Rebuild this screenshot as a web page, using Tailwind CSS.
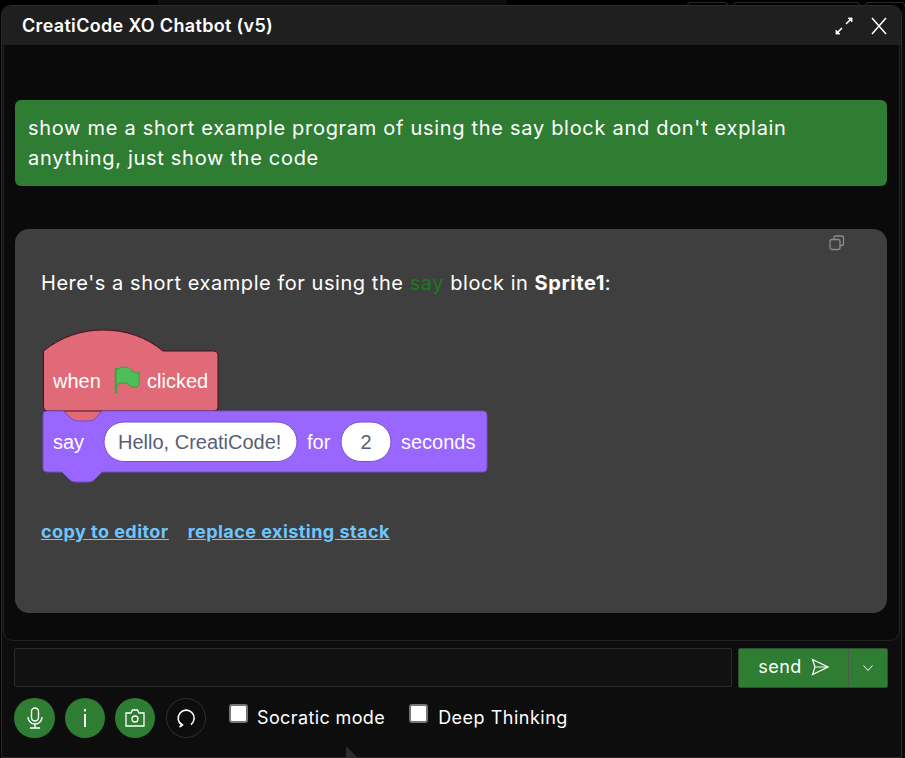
<!doctype html>
<html>
<head>
<meta charset="utf-8">
<script src="https://cdn.jsdelivr.net/npm/@tailwindcss/browser@4"></script>
</head>
<body class="bg-black w-[905px] h-[758px] overflow-hidden relative font-['Inter',sans-serif] text-white">
  <div class="absolute left-[158px] top-0 w-[349px] h-[5px] bg-[#0d0d0d]"></div>
  <div class="absolute left-[687px] top-[2px] w-[218px] h-[4px] flex">
    <div class="w-[41px] h-full rounded-t border-t border-x border-[#2a2a2a]"></div>
    <div class="w-[127px] h-full rounded-t border-t border-x border-[#2a2a2a] ml-[5px]"></div>
    <div class="w-[40px] h-full rounded-t border-t border-x border-[#2a2a2a] ml-[5px]"></div>
  </div>
  <div class="absolute left-[902px] top-[6px] w-[3px] h-[752px] bg-[#0b0b0b]"></div>
  <div class="absolute left-[1px] top-[5px] w-[901px] h-[753px] flex flex-col rounded-t-[10px] border border-[#2b2b2b] bg-[#0d0d0d] overflow-hidden">
    <header class="h-[39px] shrink-0 bg-[#1f1f1f] flex items-center justify-between pl-[20px] pr-[13px]">
      <h1 class="font-semibold text-[18px] leading-none tracking-[0.32px]">CreatiCode XO Chatbot (v5)</h1>
      <div class="flex items-center gap-[16px]">
        <svg width="20" height="20" viewBox="0 0 20 20" fill="none" stroke="#fff" stroke-width="1.6"><path d="M2 18 8 12M12 8 18 2"/><path d="M14 2h4v4zM2 14v4h4z" fill="#fff" stroke="#fff" stroke-width=".8"/></svg>
        <svg width="18" height="18" viewBox="0 0 18 18" fill="none" stroke="#fff" stroke-width="1.5"><path d="M2 1l14 16M16 1 2 17"/></svg>
      </div>
    </header>
    <main class="h-[596px] shrink-0 mx-[1px] border-b border-x border-[#222] rounded-b-[10px] bg-[#0a0a0a] pl-[11px] pr-[12px] pt-[55px]">
      <div class="h-[86px] rounded-[6px] bg-[#2e7d32] px-[13px] pt-[13px] text-[20px] leading-[30px] tracking-[0.7px]">show me a short example program of using the say block and don't explain anything, just show the code</div>
      <section class="relative mt-[43px] h-[384px] rounded-[14px] bg-[#3f3f3f] pl-[26px] pr-[26px] pt-[39px]">
        <svg class="absolute left-[814px] top-[6px]" width="16" height="16" viewBox="0 0 16 16" fill="none" stroke="#8c8c8c" stroke-width="1.3"><rect x="1" y="4.500" width="10" height="10" rx="2"/><path d="M5 4.500V3a2 2 0 0 1 2-2h5.500a2 2 0 0 1 2 2v5.500a2 2 0 0 1-2 2H11"/></svg>
        <p class="text-[20px] leading-[30px] tracking-[0.55px]">Here's a short example for using the <span class="text-[#1b7a1f]">say</span> block in <b class="font-bold">Sprite1</b>:</p>
        <svg class="block mt-[31px] font-['Liberation_Sans',sans-serif]" width="460" height="156" viewBox="0 0 460 156">
          <path d="M22 82l9 8q2 2 6 2H48q4 0 6-2l7-8z" fill="#e16a78"/>
          <path d="M2.500 22C20 8 40 1 62 1C85 1 105 8 122 22H173a4 4 0 0 1 4 4V78a4 4 0 0 1-4 4H6.500a4 4 0 0 1-4-4z" fill="#e16a78" stroke="#4a0d18" stroke-width="1"/>
          <path d="M2 86a4 4 0 0 1 4-4H22l9 8q2 2 6 2H48q4 0 6-2l7-8H442a4 4 0 0 1 4 4V139a4 4 0 0 1-4 4H61l-8 8q-2 2-6 2H35q-4 0-6-2l-8-8H6a4 4 0 0 1-4-4z" fill="#9966ff" stroke="#774dcb" stroke-width="1"/>
          <text x="12" y="59" fill="#fff" font-size="20">when</text>
          <path d="M75 39V64" stroke="#45a049" stroke-width="2.500"/>
          <path d="M75 41C81 37 87 37 90 41C93 44 96 44 98 43V56C96 59 92 59 88 56C84 53 79 53 75 57z" fill="#4cbf56" stroke="#45993d" stroke-width="1"/>
          <text x="106" y="59" fill="#fff" font-size="20">clicked</text>
          <text x="12" y="120" fill="#fff" font-size="20">say</text>
          <rect x="63" y="93" width="193" height="39.500" rx="19.750" fill="#fff" stroke="#774dcb"/>
          <text x="77" y="120" fill="#575e75" font-size="20">Hello, CreatiCode!</text>
          <text x="266" y="120" fill="#fff" font-size="20">for</text>
          <rect x="300" y="93" width="50" height="39.500" rx="19.750" fill="#fff" stroke="#774dcb"/>
          <text x="325" y="120" fill="#575e75" font-size="20" text-anchor="middle">2</text>
          <text x="360" y="120" fill="#fff" font-size="20">seconds</text>
        </svg>
        <div class="mt-[33px] flex gap-[19px] text-[18px] leading-[28px] font-bold text-[#6ec6ff] underline tracking-[0.46px]">
          <a>copy to editor</a><a>replace existing stack</a>
        </div>
      </section>
    </main>
    <div class="flex mx-[12px] mt-[7px] gap-[6px] h-[40px]">
      <div class="w-[718px] h-[39px] rounded-[2px] border border-[#2b2b2b] bg-[#111111]"></div>
      <div class="w-[150px] flex rounded-[2px] bg-[#2e7d32] border border-[#2f4f31]">
        <div class="w-[110px] flex items-center justify-center gap-[9px] text-[18px] leading-[26px] pb-[2px] tracking-[0.4px] border-r border-[#4a5a4b]">send
          <svg width="18" height="18" viewBox="0 0 18 18" fill="none" stroke="#fff" stroke-width="1.200"><path d="M1.500 1.500 17 9 1.500 16.500 4 9zM4 9h13"/></svg>
        </div>
        <div class="flex-1 flex items-center justify-center">
          <svg width="12" height="12" viewBox="0 0 12 12" fill="none" stroke="#fff"><path d="M1.500 3.500 6 8.500l4.500-5"/></svg>
        </div>
      </div>
    </div>
    <div class="flex items-center mx-[12px] mt-[10px] h-[40px]">
      <button class="w-[41px] h-[40px] rounded-full bg-[#2e7d32] flex items-center justify-center">
        <svg width="20" height="22" viewBox="0 0 20 22" fill="none" stroke="#fff" stroke-width="1.400"><rect x="6.500" y="1" width="7" height="13" rx="3.500"/><path d="M3 10a7 7 0 0 0 14 0M10 17v4M5 21h10"/></svg>
      </button>
      <button class="ml-[10px] w-[40px] h-[40px] rounded-full bg-[#2e7d32] flex items-center justify-center">
        <svg width="4" height="18" viewBox="0 0 4 18" fill="#fff"><rect x="1" y="0" width="2" height="2.500"/><rect x="1" y="5" width="2" height="13"/></svg>
      </button>
      <button class="ml-[10px] w-[40px] h-[40px] rounded-full bg-[#2e7d32] flex items-center justify-center">
        <svg width="20" height="18" viewBox="0 0 20 18" fill="none" stroke="#fff" stroke-width="1.300"><path d="M1 4h5l1.500-3h5L14 4h5v13H1z"/><circle cx="10" cy="10" r="3"/></svg>
      </button>
      <button class="ml-[11px] w-[40px] h-[40px] rounded-full border border-[#2f2f2f] flex items-center justify-center">
        <svg width="20" height="20" viewBox="0 0 20 20" fill="none" stroke="#fff" stroke-width="1.600"><path d="M6 17A8 8 0 1 1 15 16.500"/><path d="M3.500 14.500 6.500 17l-3 2"/></svg>
      </button>
      <label class="ml-[23px] h-full flex items-start text-[18px] tracking-[0.38px]">
        <span class="mt-[6px] w-[19px] h-[19px] rounded-[3px] bg-white border-2 border-[#767676]"></span><span class="mt-[6px] leading-[28px] ml-[9px]">Socratic mode</span>
      </label>
      <label class="ml-[24px] h-full flex items-start text-[18px] tracking-[0.5px]">
        <span class="mt-[6px] w-[19px] h-[19px] rounded-[3px] bg-white border-2 border-[#767676]"></span><span class="mt-[6px] leading-[28px] ml-[10px]">Deep Thinking</span>
      </label>
    </div>
  </div>
  <div class="absolute left-[346px] top-[746px] w-0 h-0 border-l-[12px] border-l-[#2c2c2c] border-t-[12px] border-t-transparent"></div>
</body>
</html>
